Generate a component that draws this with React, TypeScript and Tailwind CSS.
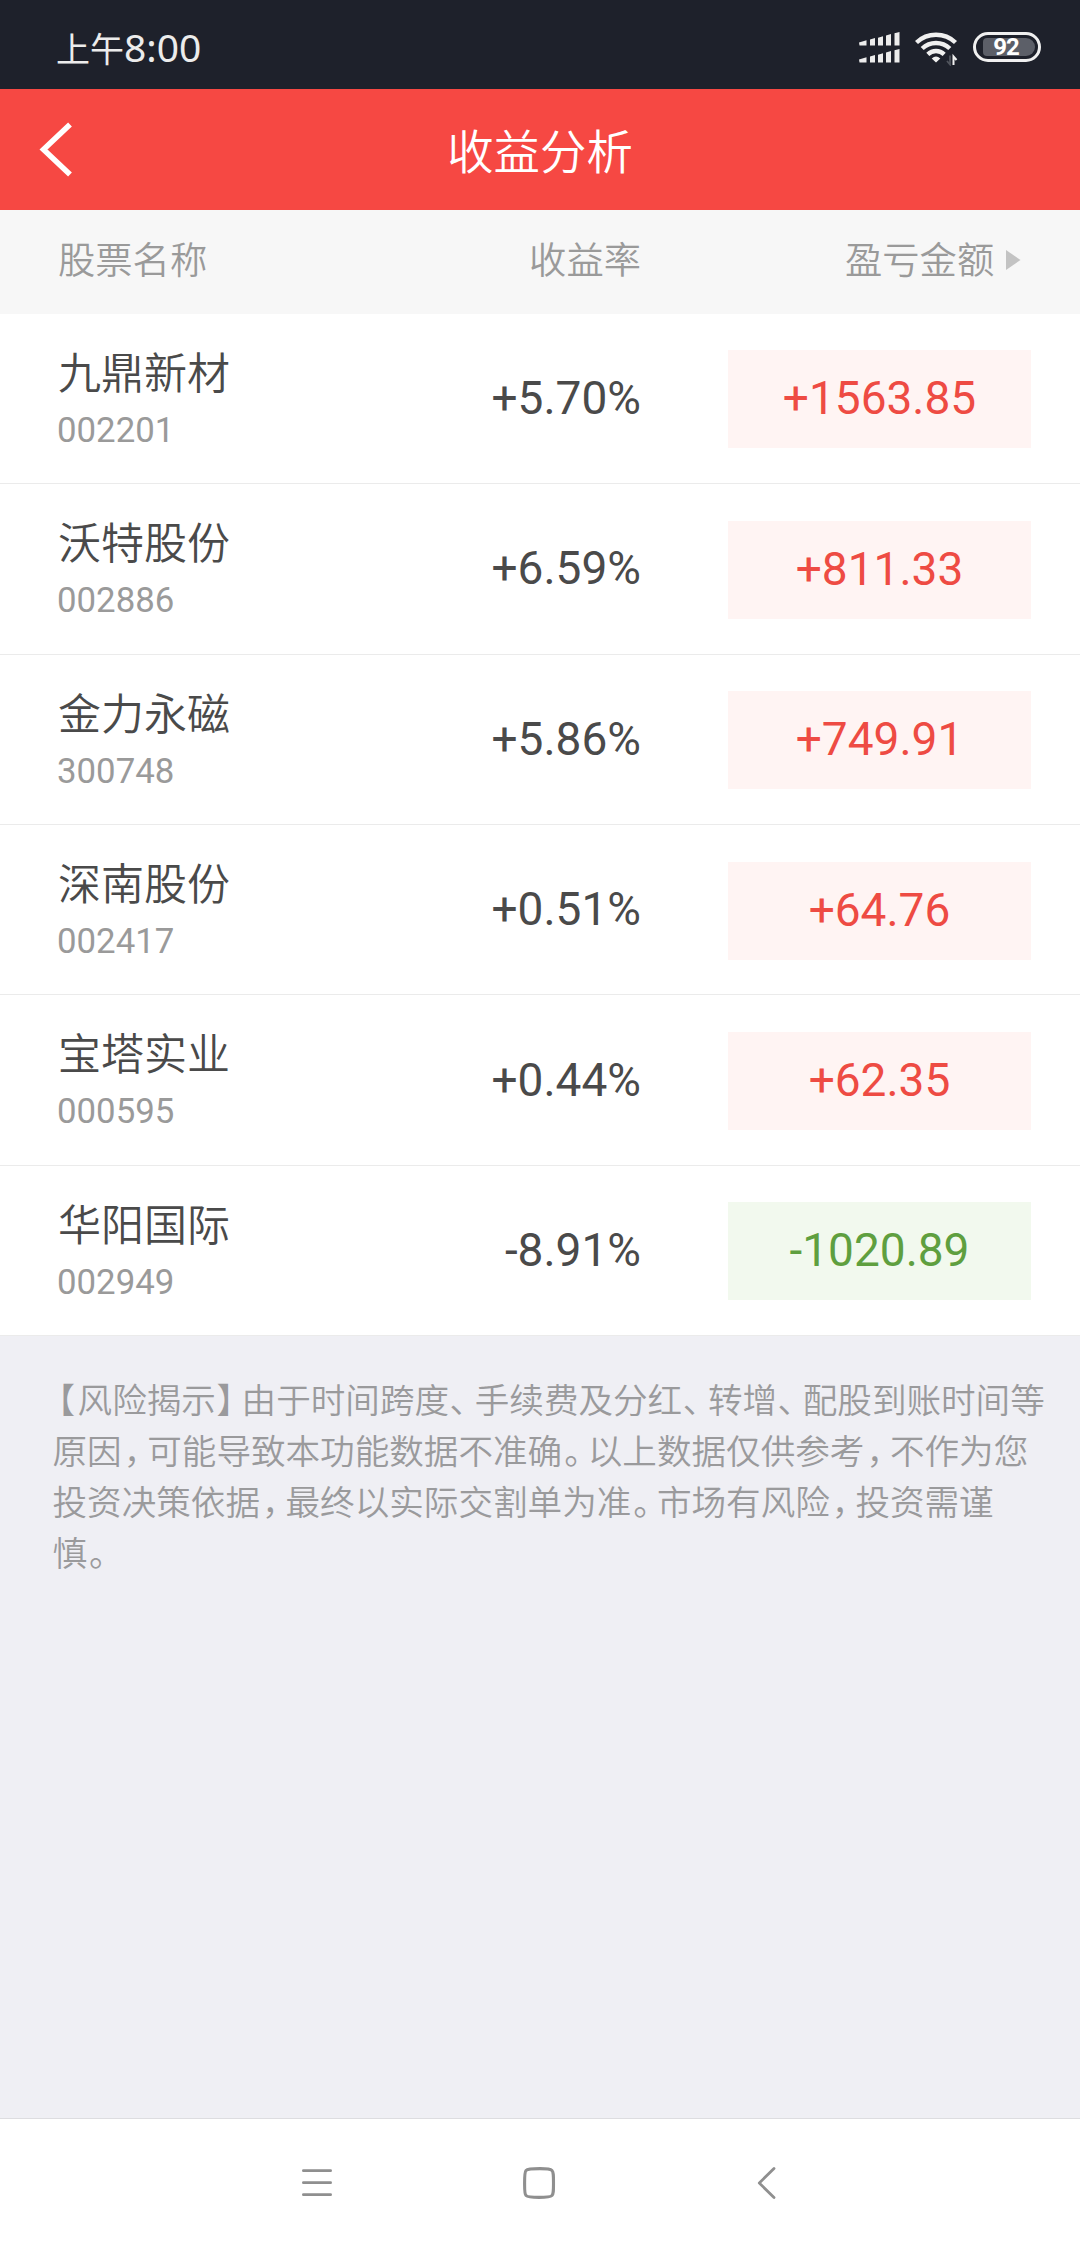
import React from "react";

const CJK = "font-['Noto_Sans_CJK_SC',sans-serif]";

type Stock = { name: string; code: string; rate: string; amount: string; gain: boolean };

const stocks: Stock[] = [
  { name: "九鼎新材", code: "002201", rate: "+5.70%", amount: "+1563.85", gain: true },
  { name: "沃特股份", code: "002886", rate: "+6.59%", amount: "+811.33", gain: true },
  { name: "金力永磁", code: "300748", rate: "+5.86%", amount: "+749.91", gain: true },
  { name: "深南股份", code: "002417", rate: "+0.51%", amount: "+64.76", gain: true },
  { name: "宝塔实业", code: "000595", rate: "+0.44%", amount: "+62.35", gain: true },
  { name: "华阳国际", code: "002949", rate: "-8.91%", amount: "-1020.89", gain: false },
];

const notice = [
  "【风险揭示】由于时间跨度、手续费及分红、转增、配股到账时间等",
  "原因，可能导致本功能数据不准确。以上数据仅供参考，不作为您",
  "投资决策依据，最终以实际交割单为准。市场有风险，投资需谨",
  "慎。",
];

// Tightens full-width punctuation so that each mark takes about 25px.
function NoticeLine({ text }: { text: string }) {
  return (
    <div className="whitespace-nowrap">
      {text.split(/([【】，。、])/).map((part, i) => {
        if (part === "【") return <span key={i} className="-ml-[12px] mr-[2.5px]">{part}</span>;
        if (/^[，。]$/.test(part)) return <span key={i} className="ml-[2px] tracking-[-11px]">{part}</span>;
        if (/^[】、]$/.test(part)) return <span key={i} className="ml-[0.5px] tracking-[-9.4px]">{part}</span>;
        return <React.Fragment key={i}>{part}</React.Fragment>;
      })}
    </div>
  );
}

function Signal() {
  return (
    <svg width="41" height="31" viewBox="0 0 41 31" fill="#ececec">
      <path d="M0 10.5 7.5 8.2V13.5H.5zM11 7.5 16 6V13.5H11zM19 5.7 24 4.2V13.5H19zM27 3.5 32 2V13.5H27zM35.5 1.3 40.5 0V13.5H35.5z" />
      <path d="M0 27.5 7.5 25.2V30.5H.5zM11 24.5 16 23V30.5H11zM19 22.7 24 21.2V30.5H19zM27 20.5 32 19V30.5H27zM35.5 18.3 40.5 17V30.5H35.5z" />
    </svg>
  );
}

function Wifi() {
  return (
    <svg width="44" height="34" viewBox="0 0 44 34" fill="none" stroke="#f0f0f0" strokeWidth="4.4">
      <path d="M1.5 10.5A28.5 28.5 0 0 1 40.5 10.5" />
      <path d="M7.2 16.5A20 20 0 0 1 34.8 16.5" />
      <path d="M12.8 22.3A12 12 0 0 1 29.2 22.3" />
      <path d="M16.7 26.5Q21 22.5 25.3 26.5L21 30.5z" fill="#f0f0f0" stroke="none" />
      <path d="M35 23.5V32.5L32 29" stroke="#50545c" strokeWidth="1.8" />
      <path d="M38.5 33V24.5L41.5 28" stroke="#f0f0f0" strokeWidth="2" />
    </svg>
  );
}

export default function App() {
  return (
    <div className={`flex h-[2248px] w-[1080px] flex-col overflow-hidden bg-[#efeff4] font-[350] ${CJK}`}>
      <div className="flex h-[89px] shrink-0 items-start bg-[#1e212b] font-normal text-[#ececec]">
        <div className="mt-[19px] ml-[56px] flex h-[56px] items-baseline leading-[56px]">
          <span className="text-[34px]">上午</span>
          <span className="font-['Noto_Sans',sans-serif] text-[39px]">8:00</span>
        </div>
        <div className="mt-[32px] mr-[39px] ml-auto flex items-start">
          <Signal />
          <div className="ml-[15px]"><Wifi /></div>
          <div className="ml-[14px] flex h-[30px] w-[68px] rounded-full border-[3px] border-[#f0f0f0] p-[3px] pl-[7px]">
            <div className="flex flex-1 items-center justify-center rounded-l-[4px] rounded-r-[9px] bg-[#5c5f68] pr-[6px] font-['Roboto',sans-serif] text-[24px] leading-none font-bold tracking-[-1px] text-white">
              92
            </div>
          </div>
        </div>
      </div>

      <div className="grid h-[121px] shrink-0 grid-cols-[200px_1fr_200px] items-center bg-[#f64843] text-white">
        <svg className="-mt-[1px] ml-[38px]" width="36" height="56" viewBox="0 0 36 56" fill="none" stroke="currentColor" strokeWidth="5.5">
          <path d="M32 3.5 5.5 28.5 32 53.5" />
        </svg>
        <h1 className="-mt-[1px] text-center text-[46.4px] leading-[60px] font-[350]">收益分析</h1>
      </div>

      <div className="flex h-[104px] shrink-0 items-start bg-[#f7f7f7] pt-[18px] text-[37.3px] leading-[60px] text-[#9a9a9a]">
        <div className="ml-[58px] w-[299px]">股票名称</div>
        <div className="w-[284px] text-right">收益率</div>
        <div className="ml-[204px]">盈亏金额</div>
        <svg className="mt-[22px] ml-[12px]" width="15" height="20" viewBox="0 0 15 20" fill="#c3c3c3">
          <path d="M0 0 14.5 10 0 20z" />
        </svg>
      </div>

      <div className="-mt-[0.3px] shrink-0">
        {stocks.map((s) => (
          <div key={s.code} className="flex h-[170.42px] items-start border-b border-[#ebebeb] bg-white">
            <div className="ml-[58px] w-[299px] pt-[31px]">
              <div className="text-[43px] leading-[50px] text-[#4a4a4a]">{s.name}</div>
              <div className="mt-[15px] -ml-[1px] font-['Roboto',sans-serif] text-[34.8px] leading-[40px] font-normal text-[#9a9a9a]">{s.code}</div>
            </div>
            <div className="w-[284px] pt-[54.2px] text-right font-['Roboto',sans-serif] text-[46px] leading-[60px] font-normal text-[#4a4a4a]">
              {s.rate}
            </div>
            <div
              className={`mt-[36.75px] ml-[87px] flex h-[98px] w-[303px] items-center justify-center pb-[2px] font-['Roboto',sans-serif] text-[46px] leading-[60px] font-normal ${
                s.gain ? "bg-[#fff4f3] text-[#ee4b43]" : "bg-[#f2f9ee] text-[#5f9f3f]"
              }`}
            >
              {s.amount}
            </div>
          </div>
        ))}
      </div>

      <div className="pt-[37px] pl-[52.5px] text-[34.6px] leading-[51px] text-[#9a9a9c]">
        {notice.map((line) => (
          <NoticeLine key={line} text={line} />
        ))}
      </div>

      <div className="mt-auto flex h-[130px] shrink-0 items-start border-t border-[#dddde0] bg-white pt-[47px] pl-[300px]">
        <svg width="32" height="34" viewBox="0 0 32 34" stroke="#8f8f8f" strokeWidth="2.8" strokeLinecap="round">
          <path d="M3.4 4.7H30.6M3.4 16.7H30.6M3.4 28.7H30.6" />
        </svg>
        <svg className="ml-[191px]" width="34" height="34" viewBox="0 0 34 34" fill="none" stroke="#8f8f8f" strokeWidth="3.1">
          <path d="M17 2.6C25 2.6 27.5 3 29 4.5S30.5 9 30.5 17 30.5 28 29 29.5 25 31.4 16 31.4 4.5 31 3 29.5 1.6 25 1.6 17 1.6 6 3 4.5 7 2.6 17 2.6z" />
        </svg>
        <svg className="ml-[200px]" width="20" height="34" viewBox="0 0 20 34" fill="none" stroke="#8f8f8f" strokeWidth="2.8" strokeLinecap="round" strokeLinejoin="round">
          <path d="M17 2.5 2.3 17 17 31.5" />
        </svg>
      </div>
    </div>
  );
}
